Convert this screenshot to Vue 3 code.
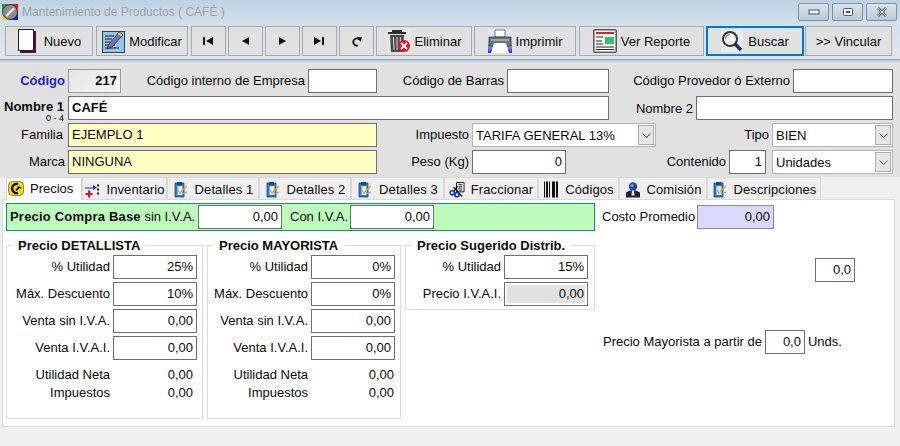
<script setup>
const tabs = [
  { label: 'Precios', icon: 'i-precios', width: 76, active: true },
  { label: 'Inventario', icon: 'i-inv', width: 85 },
  { label: 'Detalles 1', icon: 'i-det', width: 92 },
  { label: 'Detalles 2', icon: 'i-det', width: 92 },
  { label: 'Detalles 3', icon: 'i-det', width: 93 },
  { label: 'Fraccionar', icon: 'i-frac', width: 94 },
  { label: 'Códigos', icon: 'i-cod', width: 81 },
  { label: 'Comisión', icon: 'i-com', width: 88 },
  { label: 'Descripciones', icon: 'i-det', width: 114 }
]

const detallista = [
  { label: '% Utilidad', value: '25%' },
  { label: 'Máx. Descuento', value: '10%' },
  { label: 'Venta sin I.V.A.', value: '0,00' },
  { label: 'Venta I.V.A.I.', value: '0,00' }
]

const mayorista = [
  { label: '% Utilidad', value: '0%' },
  { label: 'Máx. Descuento', value: '0%' },
  { label: 'Venta sin I.V.A.', value: '0,00' },
  { label: 'Venta I.V.A.I.', value: '0,00' }
]
</script>

<template>
  <div class="win">
    <svg class="defs" width="0" height="0">
      <defs>
        <symbol id="i-precios" viewBox="0 0 16 16">
          <rect x="0.500" y="1" width="15" height="14" rx="4" fill="#f2dc1a" stroke="#4a4000" stroke-width="0.600" />
          <path d="M10 3.600A4.600 4.600 0 1 0 10 12.400" fill="none" stroke="#111" stroke-width="2.400" />
          <path d="M7.500 9.500l3-4 3 1.500-1 1.200-1.400-.4L9 10.600z" fill="#111" />
        </symbol>
        <symbol id="i-inv" viewBox="0 0 16 16">
          <path d="M1 6h8V3.500L13 6l-4 2.500V7H1z" fill="#1a2ae0" />
          <path d="M4 9h2v2.500h2.500v2H6V16H4v-2.500H1.500v-2H4z" fill="#e01020" />
          <path d="M13 3h2v2h-2zM13 7h2v2h-2zM13 11h2v2h-2z" fill="#111" />
        </symbol>
        <symbol id="i-det" viewBox="0 0 16 17">
          <path d="M2 2h9v14H2z" fill="#2f78c8" stroke="#174a80" stroke-width="0.800" />
          <rect x="4.500" y="5" width="5" height="9" fill="#dfeaf6" />
          <path d="M5 9l2 3 7-7" fill="none" stroke="#d9a520" stroke-width="1.200" />
          <path d="M9 13l5-2" stroke="#7fa8d8" stroke-width="1.200" />
          <path d="M4 1h5v3H4z" fill="#174a80" />
        </symbol>
        <symbol id="i-frac" viewBox="0 0 17 17">
          <path d="M8 1h8v10H8z" fill="#fff" stroke="#111" />
          <path d="M10 3h4M10 5h4M10 7h4M10 9h4" stroke="#111" />
          <path d="M9 5L5 11M5 6l9 10" stroke="#111" stroke-width="1.400" />
          <circle cx="3.500" cy="12" r="2.200" fill="#fff" stroke="#1530c8" stroke-width="1.800" />
          <circle cx="8.500" cy="14" r="2.200" fill="#fff" stroke="#1530c8" stroke-width="1.800" />
        </symbol>
        <symbol id="i-cod" viewBox="0 0 16 16">
          <path d="M1 0h1v16H1zM3 0h2v16H3zM6 0h1v16H6zM9 0h3v16H9zM13 0h2v16h-2z" fill="#111" />
        </symbol>
        <symbol id="i-com" viewBox="0 0 16 16">
          <rect width="16" height="16" fill="#ececec" />
          <path d="M1 16v-5l4-2h6l4 2v5z" fill="#1d2433" />
          <circle cx="8" cy="5" r="4.200" fill="#26479a" />
          <circle cx="7" cy="4" r="1.600" fill="#7f9adf" />
          <path d="M7 9h2l.6 5H6.400z" fill="#dfe3ea" />
        </symbol>
      </defs>
    </svg>

    <div class="chrome">
      <header class="title">
        <svg class="logo" width="16" height="16" viewBox="0 0 16 16">
          <path d="M0 0h8v8H0z" fill="#1fa31f" />
          <path d="M8 0h8v8H8z" fill="#e01818" />
          <path d="M0 8h8v8H0z" fill="#f0e010" />
          <path d="M8 8h8v8H8z" fill="#1420d0" />
          <circle cx="8" cy="8" r="7.500" fill="#8c8c8c" stroke="#3e3e3e" />
          <path d="M3.500 11L11 3.500l2 1.500L5 13z" fill="#e0e0e0" />
        </svg>
        <span class="title_text">Mantenimiento de Productos ( CAFÉ )</span>
        <div class="winbtns">
          <span class="wbtn">
            <svg width="12" height="6"><rect x="1" y="1" width="10" height="4" fill="#fff" stroke="#4c5560" /></svg>
          </span>
          <span class="wbtn">
            <svg width="12" height="10"><rect x="1.500" y="1.500" width="9" height="7" rx="1" fill="#fff" stroke="#4c5560" /><rect x="4" y="4" width="4" height="2" fill="#4c5560" /></svg>
          </span>
          <span class="wbtn">
            <svg width="12" height="10"><path d="M2 1l8 8M10 1l-8 8" stroke="#4c5560" stroke-width="2.600" /><path d="M2 1l8 8M10 1l-8 8" stroke="#fff" stroke-width="1" /></svg>
          </span>
        </div>
      </header>

      <nav class="toolbar">
        <button class="tb nuevo">
          <svg width="19" height="24" viewBox="0 0 19 24">
            <rect x="3" y="2" width="16" height="22" fill="#5a1020" />
            <rect x="1.500" y="0.500" width="15" height="21" fill="#fff" stroke="#0c1f60" />
          </svg>
          <span>Nuevo</span>
        </button>
        <button class="tb modificar">
          <svg width="23" height="23" viewBox="0 0 23 23">
            <rect x="0.500" y="1.500" width="22" height="21" fill="#93c6e6" stroke="#33404a" />
            <path d="M3 6h9M3 9h7M3 12h5M3 15h10M3 18h14" stroke="#222" stroke-width="1.200" />
            <path d="M17 2l4 3-11 12-5 2 2-5z" fill="#7a6fb0" stroke="#2d2850" stroke-width="0.800" />
            <path d="M17 2l4 3-2 2-4-3z" fill="#f0dc90" stroke="#2d2850" stroke-width="0.600" />
          </svg>
          <span>Modificar</span>
        </button>
        <button class="tb nav">
          <svg width="11" height="8"><path d="M0 0h2v8H0zM10 0v8L3 4z" fill="#111" /></svg>
        </button>
        <button class="tb nav">
          <svg width="9" height="8"><path d="M8 0v8L1 4z" fill="#111" /></svg>
        </button>
        <button class="tb nav">
          <svg width="9" height="8"><path d="M1 0v8l7-4z" fill="#111" /></svg>
        </button>
        <button class="tb nav">
          <svg width="11" height="8"><path d="M0 0v8l7-4zM8 0h2v8H8z" fill="#111" /></svg>
        </button>
        <button class="tb nav">
          <svg width="11" height="11" viewBox="0 0 11 11"><path d="M8.500 3.500A3.600 3.600 0 1 0 7 9.500" fill="none" stroke="#111" stroke-width="1.800" /><path d="M6 .8l5 .7-1.600 4.500z" fill="#111" /></svg>
        </button>
        <button class="tb eliminar">
          <svg width="24" height="24" viewBox="0 0 24 24">
            <rect width="24" height="24" fill="#e6e6e6" />
            <path d="M5 1h10v2h4v2H1V3h4z" fill="#2d2d2d" />
            <path d="M3 6h14l-1 17H4z" fill="#4a4a4a" />
            <path d="M6.500 8l.5 13M10 8v13M13.500 8L13 21" stroke="#c4c4c4" stroke-width="1.200" />
            <circle cx="17" cy="17" r="6" fill="#d71a2a" />
            <path d="M14 14l6 6M20 14l-6 6" stroke="#fff" stroke-width="1.800" />
          </svg>
          <span>Eliminar</span>
        </button>
        <button class="tb imprimir">
          <svg width="24" height="24" viewBox="0 0 24 24">
            <defs><linearGradient id="pb" x1="0" y1="0" x2="0" y2="1"><stop offset="0.500" stop-color="#dfe6f2" /><stop offset="1" stop-color="#1537d6" /></linearGradient></defs>
            <rect width="24" height="24" fill="url(#pb)" />
            <path d="M7 1h10v7H7z" fill="#fff" stroke="#555" stroke-width="0.800" />
            <path d="M1 8h22v9H1z" fill="#6f7478" stroke="#33383c" stroke-width="0.800" />
            <path d="M3 10h18v2H3z" fill="#a3a8ab" />
            <path d="M6 14h12l3 10H3z" fill="#fff" />
          </svg>
          <span>Imprimir</span>
        </button>
        <button class="tb reporte">
          <svg width="24" height="24" viewBox="0 0 24 24">
            <rect x="0.800" y="0.800" width="22.400" height="22.400" rx="1" fill="#fff" stroke="#5a5a5a" stroke-width="1.600" />
            <rect x="3" y="3" width="18" height="2" fill="#e42024" />
            <path d="M3 8h7M3 12h6M3 15h7M3 18h18M3 20.500h18" stroke="#222" />
            <rect x="12" y="8" width="9" height="7" fill="#2fc46a" />
          </svg>
          <span>Ver Reporte</span>
        </button>
        <button class="tb buscar">
          <svg width="22" height="22" viewBox="0 0 22 22">
            <rect width="22" height="22" fill="#ececec" />
            <circle cx="9" cy="9" r="7" fill="#f4f6f8" stroke="#333" stroke-width="2" />
            <path d="M4.500 9A4.500 4.500 0 0 1 9 4.500" stroke="#9a9a9a" stroke-width="1.500" fill="none" />
            <path d="M14 14l6 6" stroke="#1d2c6e" stroke-width="3.400" />
          </svg>
          <span>Buscar</span>
        </button>
        <button class="tb vincular"><span>&gt;&gt; Vincular</span></button>
      </nav>
    </div>

    <section class="form">
      <div class="row r1">
        <label class="codigo">Código</label>
        <div class="fld code">217</div>
        <label>Código interno de Empresa</label>
        <div class="fld"></div>
        <label>Código de Barras</label>
        <div class="fld"></div>
        <label>Código Provedor ó Externo</label>
        <div class="fld"></div>
      </div>
      <div class="row r2">
        <label class="nombre"><b>Nombre 1</b><small>0 - 4</small></label>
        <div class="fld left strong">CAFÉ</div>
        <label>Nombre 2</label>
        <div class="fld"></div>
      </div>
      <div class="row r3">
        <label class="familia">Familia</label>
        <div class="fld left yellow">EJEMPLO 1</div>
        <label>Impuesto</label>
        <div class="select"><span>TARIFA GENERAL 13%</span><i class="arrow"><svg width="9" height="5"><path d="M.5.500L4.500 4.500 8.500.500" fill="none" stroke="#555" /></svg></i></div>
        <label>Tipo</label>
        <div class="select"><span>BIEN</span><i class="arrow"><svg width="9" height="5"><path d="M.5.500L4.500 4.500 8.500.500" fill="none" stroke="#555" /></svg></i></div>
      </div>
      <div class="row r4">
        <label>Marca</label>
        <div class="fld left yellow">NINGUNA</div>
        <label>Peso (Kg)</label>
        <div class="fld">0</div>
        <label>Contenido</label>
        <div class="fld">1</div>
        <div class="select unidades"><span>Unidades</span><i class="arrow"><svg width="9" height="5"><path d="M.5.500L4.500 4.500 8.500.500" fill="none" stroke="#555" /></svg></i></div>
      </div>
    </section>

    <div class="tabs">
      <div v-for="t in tabs" :key="t.label" class="tab" :class="{ active: t.active }" :style="{ width: t.width + 'px' }">
        <svg width="16" height="17"><use :href="'#' + t.icon" /></svg>
        <span>{{ t.label }}</span>
      </div>
    </div>

    <main class="panel">
      <div class="top">
        <div class="compra">
          <span class="compra_label"><b>Precio Compra Base</b> sin I.V.A.</span>
          <div class="fld num">0,00</div>
          <span class="con">Con I.V.A.</span>
          <div class="fld num">0,00</div>
        </div>
        <span class="costo">Costo Promedio</span>
        <div class="fld promedio">0,00</div>
      </div>

      <div class="groups">
        <fieldset class="group det">
          <legend>Precio DETALLISTA</legend>
          <div v-for="r in detallista" :key="r.label" class="prow">
            <span>{{ r.label }}</span>
            <div class="fld num">{{ r.value }}</div>
          </div>
          <div class="trow first"><span>Utilidad Neta</span><em>0,00</em></div>
          <div class="trow"><span>Impuestos</span><em>0,00</em></div>
        </fieldset>

        <fieldset class="group may">
          <legend>Precio MAYORISTA</legend>
          <div v-for="r in mayorista" :key="r.label" class="prow">
            <span>{{ r.label }}</span>
            <div class="fld num">{{ r.value }}</div>
          </div>
          <div class="trow first"><span>Utilidad Neta</span><em>0,00</em></div>
          <div class="trow"><span>Impuestos</span><em>0,00</em></div>
        </fieldset>

        <fieldset class="group sug">
          <legend>Precio Sugerido Distrib.</legend>
          <div class="prow">
            <span>% Utilidad</span>
            <div class="fld num">15%</div>
          </div>
          <div class="prow">
            <span>Precio I.V.A.I.</span>
            <div class="fld num locked">0,00</div>
          </div>
        </fieldset>

        <div class="side">
          <div class="fld solo">0,0</div>
          <div class="partir">
            <span>Precio Mayorista a partir de</span>
            <div class="fld solo2">0,0</div>
            <span>Unds.</span>
          </div>
        </div>
      </div>
    </main>
  </div>
</template>

<style scoped>
.win {
  width: 900px;
  height: 446px;
  overflow: hidden;
  background: #f0f0f0;
  color: #0a0a0a;
  font-family: "Liberation Sans", Arial, sans-serif;
  font-size: 13px;
}

.defs {
  position: absolute;
}

.chrome {
  height: 59px;
  background: linear-gradient(#bfd2e4, #d3e0ec 40%, #dfe6ee);
  border-bottom: 1px solid #8da3a5;
}

.title {
  display: flex;
  align-items: center;
  height: 24px;
  padding-left: 2px;
  box-sizing: border-box;
}

.title_text {
  margin-left: 4px;
  color: #98a2ac;
  font-size: 12px;
}

.winbtns {
  display: flex;
  gap: 3px;
  margin-left: auto;
  margin-right: 3px;
  margin-top: -1px;
}

.wbtn {
  display: flex;
  align-items: center;
  justify-content: center;
  width: 31px;
  height: 18px;
  box-sizing: border-box;
  border: 1px solid #7f8ea0;
  border-radius: 2px;
  background: linear-gradient(#dbe4ee, #b9c9da);
}

.toolbar {
  display: flex;
  padding: 2px 0 0 5px;
  gap: 3px;
}

.tb {
  display: flex;
  align-items: center;
  justify-content: center;
  gap: 7px;
  height: 30px;
  padding: 0;
  box-sizing: border-box;
  border: 1px solid #a8a8a8;
  background: #e1e1e1;
  color: #0a0a0a;
  font: inherit;
}

.nuevo { width: 88px; gap: 8px; }
.modificar { width: 92px; gap: 4px; }
.nav { width: 35px; margin-right: -1px; }
.eliminar { width: 96px; gap: 4px; }
.imprimir { width: 102px; margin-left: -1px; gap: 4px; }
.reporte { width: 125px; gap: 4px; }
.buscar {
  width: 98px;
  margin-left: -1px;
  gap: 5px;
  border: 2px solid #0078d7;
}
.vincular { width: 87px; margin-left: -2px; }

.form {
  height: 118px;
  padding-top: 7px;
  box-sizing: border-box;
  border-top: 2px solid #c3cbdf;
  background: #e1e1e1;
}

.row {
  display: grid;
  column-gap: 3px;
  height: 24px;
  margin-bottom: 3px;
  width: 893px;
}

.r1 { grid-template-columns: 65px 53px 181px 69px 124px 102px 178px 100px; }
.r2 { grid-template-columns: 65px 541px 81px 197px; }
.r3 { grid-template-columns: 65px 309px 89px 184px 110px 121px; }
.r4 { grid-template-columns: 65px 309px 89px 94px 157px 37px 124px; }

label {
  display: flex;
  align-items: center;
  justify-content: flex-end;
  padding-bottom: 1px;
  box-sizing: border-box;
  white-space: nowrap;
}

.codigo {
  color: #1f1fe0;
  font-weight: bold;
}

.familia {
  padding-right: 2px;
}

.nombre {
  flex-direction: column;
  align-items: flex-end;
  justify-content: flex-start;
  line-height: 13px;
  padding: 4px 1px 0 0;
  height: 26px;
}

.nombre b {
  display: block;
}

.nombre small {
  display: block;
  font-size: 9px;
  line-height: 9px;
  margin-top: 1px;
}

.fld {
  display: flex;
  align-items: center;
  justify-content: flex-end;
  height: 24px;
  box-sizing: border-box;
  padding: 0 3px 1px;
  border: 1px solid #6e6e6e;
  background: #fff;
  white-space: nowrap;
}

.fld.left {
  justify-content: flex-start;
}

.code {
  background: linear-gradient(135deg, #e6e6e6, #f6f6f6);
  border-color: #9a9a9a;
  font-weight: bold;
}

.strong {
  font-weight: bold;
}

.yellow {
  background: #ffffc4;
}

.select {
  display: flex;
  align-items: center;
  justify-content: space-between;
  height: 24px;
  box-sizing: border-box;
  padding: 0 1px 0 3px;
  border: 1px solid #b4b4b4;
  background: #fff;
  white-space: nowrap;
}

.arrow {
  display: flex;
  align-items: center;
  justify-content: center;
  width: 16px;
  height: 20px;
  box-sizing: border-box;
  border: 1px solid #acacac;
  background: #e6e6e6;
}

.unidades {
  margin-left: 3px;
}

.tabs {
  display: flex;
  height: 22px;
  margin-top: -1px;
  padding-left: 6px;
  align-items: flex-end;
  background: #f0f0f0;
}

.tab {
  display: flex;
  align-items: center;
  justify-content: center;
  gap: 6px;
  height: 22px;
  padding-top: 2px;
  box-sizing: border-box;
  border: 1px solid #d9d9d9;
  border-bottom: 0;
  background: #efefef;
  letter-spacing: 0.1px;
  white-space: nowrap;
}

.tab.active {
  justify-content: flex-start;
  height: 23px;
  padding: 0 0 2px 1px;
  margin-bottom: -1px;
  background: #fff;
  letter-spacing: 0;
  position: relative;
  z-index: 1;
}

.panel {
  width: 893px;
  height: 228px;
  margin-left: 2px;
  box-sizing: border-box;
  padding: 3px 0 0 3px;
  border: 1px solid #d9d9d9;
  background: #fff;
}

.top {
  display: flex;
  align-items: center;
  height: 28px;
}

.compra {
  display: flex;
  align-items: center;
  width: 589px;
  height: 28px;
  box-sizing: border-box;
  padding-left: 3px;
  border: 1px solid #1b8a72;
  background: #bdfcbd;
}

.compra_label {
  width: 188px;
  padding-bottom: 1px;
  white-space: nowrap;
}

.compra_label b {
  letter-spacing: 0.2px;
}

.compra .num {
  width: 84px;
}

.con {
  margin: 0 3px 0 8px;
  width: 57px;
  padding-bottom: 1px;
  white-space: nowrap;
}

.costo {
  width: 93px;
  margin-left: 7px;
  padding-bottom: 1px;
  white-space: nowrap;
}

.promedio {
  width: 77px;
  margin-left: 2px;
  background: #d9d9fb;
  border-color: #888;
}

.groups {
  display: flex;
  gap: 4px;
  margin-top: 7px;
}

.group {
  min-width: 0;
  margin: 0;
  padding: 3px 5px 0 0;
  box-sizing: border-box;
  border: 1px solid #dcdcdc;
}

.group legend {
  margin-left: 5px;
  padding: 2px 6px 0;
  font-weight: bold;
  font-size: 13px;
  line-height: 12px;
  white-space: nowrap;
}

.det { width: 197px; height: 181px; }
.may { width: 194px; height: 181px; }
.sug { width: 190px; height: 72px; padding-right: 6px; }

.prow {
  display: flex;
  align-items: center;
  justify-content: flex-end;
  gap: 3px;
  height: 24px;
  margin-bottom: 3px;
  white-space: nowrap;
}

.prow span {
  padding-bottom: 1px;
}

.prow .num {
  width: 84px;
}

.locked {
  background: #e1e1e1;
  box-shadow: inset 0 0 0 2px #fff;
}

.trow {
  display: flex;
  align-items: center;
  justify-content: flex-end;
  height: 18px;
  margin-right: 4px;
  white-space: nowrap;
}

.trow.first {
  margin-top: 5px;
}

.trow span {
  margin-right: 3px;
}

.trow em {
  width: 80px;
  font-style: normal;
  text-align: right;
}

.may .trow {
  margin-right: 1px;
}

.may .trow em {
  width: 83px;
}

.side {
  display: flex;
  flex-direction: column;
  margin-left: 4px;
}

.solo {
  width: 40px;
  margin: 20px 0 0 212px;
}

.partir {
  display: flex;
  align-items: center;
  gap: 3px;
  margin-top: 48px;
  white-space: nowrap;
}

.partir span {
  padding-bottom: 1px;
}

.solo2 {
  width: 40px;
}
</style>

<style>
html, body {
  margin: 0;
  background: #f0f0f0;
}
</style>
